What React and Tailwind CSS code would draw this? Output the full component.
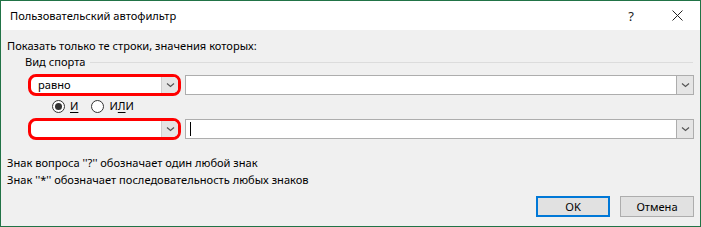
import React from 'react'

function Chevron() {
  return (
    <svg width="9" height="6" viewBox="0 0 9 6" className="block">
      <path d="M1 1.5 L4.5 4.5 L8 1.5" fill="none" stroke="#555" strokeWidth="1.2" />
    </svg>
  )
}

function Radio({ checked }) {
  return (
    <span className="w-[13px] h-[13px] rounded-full border border-[#333] bg-white flex items-center justify-center">
      {checked && <span className="w-[7px] h-[7px] rounded-full bg-[#333]" />}
    </span>
  )
}

function MarkedCombo({ value }) {
  return (
    <div className="w-[153px] h-[22px] border-[3px] border-[#ff0000] rounded-[8px] bg-white flex overflow-hidden">
      <div className="flex-1 pl-[7px] flex items-center leading-none">{value}</div>
      <div className="w-[17px] bg-[#e5e5e5] border-l border-[#cfcfcf] flex items-center justify-center">
        <Chevron />
      </div>
    </div>
  )
}

function Combo({ caret }) {
  return (
    <div className="flex-1 h-[20px] border border-[#adadad] bg-white flex">
      <div className="flex-1 pl-[4px] flex items-center">
        {caret && <span className="w-px h-[14px] bg-black" />}
      </div>
      <div className="w-[17px] bg-[#e5e5e5] border-l border-[#adadad] flex items-center justify-center">
        <Chevron />
      </div>
    </div>
  )
}

export default function App() {
  return (
    <div className="w-[701px] h-[227px] border border-[#217346] bg-[#f0f0f0] flex flex-col overflow-hidden font-['Noto_Sans',sans-serif] text-[11.1px] leading-[16px] text-black">
      <div className="h-[29px] bg-white flex items-center pl-[9px] pr-[17px] shrink-0">
        <span>Пользовательский автофильтр</span>
        <span className="ml-auto text-[13px] text-[#222]">?</span>
        <svg width="11" height="11" viewBox="0 0 11 11" className="ml-[38px]">
          <path d="M0.5 0.5 L10.5 10.5 M10.5 0.5 L0.5 10.5" stroke="#222" strokeWidth="1" />
        </svg>
      </div>

      <div className="flex flex-col pl-[6px] pr-[6px]">
        <div className="mt-[8px] h-[16px]">Показать только те строки, значения которых:</div>

        <div className="h-[16px] flex items-center pl-[18px]">
          <span>Вид спорта</span>
          <span className="flex-1 h-px bg-[#dcdcdc] ml-[5px] mr-[1px]" />
        </div>

        <div className="mt-[4px] flex items-center gap-[4px] pl-[21px]">
          <MarkedCombo value="равно" />
          <Combo />
        </div>

        <div className="mt-[1px] h-[18px] flex items-center pl-[45px]">
          <Radio checked />
          <span className="ml-[5px] underline underline-offset-2">И</span>
          <span className="ml-[13px]"><Radio /></span>
          <span className="ml-[5px]">И<span className="underline underline-offset-2">Л</span>И</span>
        </div>

        <div className="mt-[3px] flex items-center gap-[4px] pl-[21px]">
          <MarkedCombo value="" />
          <Combo caret />
        </div>

        <div className="mt-[15px] h-[16px]">Знак вопроса ''?'' обозначает один любой знак</div>
        <div className="mt-[1px] h-[16px]">Знак ''*'' обозначает последовательность любых знаков</div>

        <div className="mt-[8px] flex justify-end gap-[10px]">
          <button className="w-[74px] h-[21px] border-2 border-[#0078d7] bg-[#e1e1e1] flex items-center justify-center">OK</button>
          <button className="w-[74px] h-[21px] border border-[#adadad] bg-[#e1e1e1] flex items-center justify-center">Отмена</button>
        </div>
      </div>
    </div>
  )
}
